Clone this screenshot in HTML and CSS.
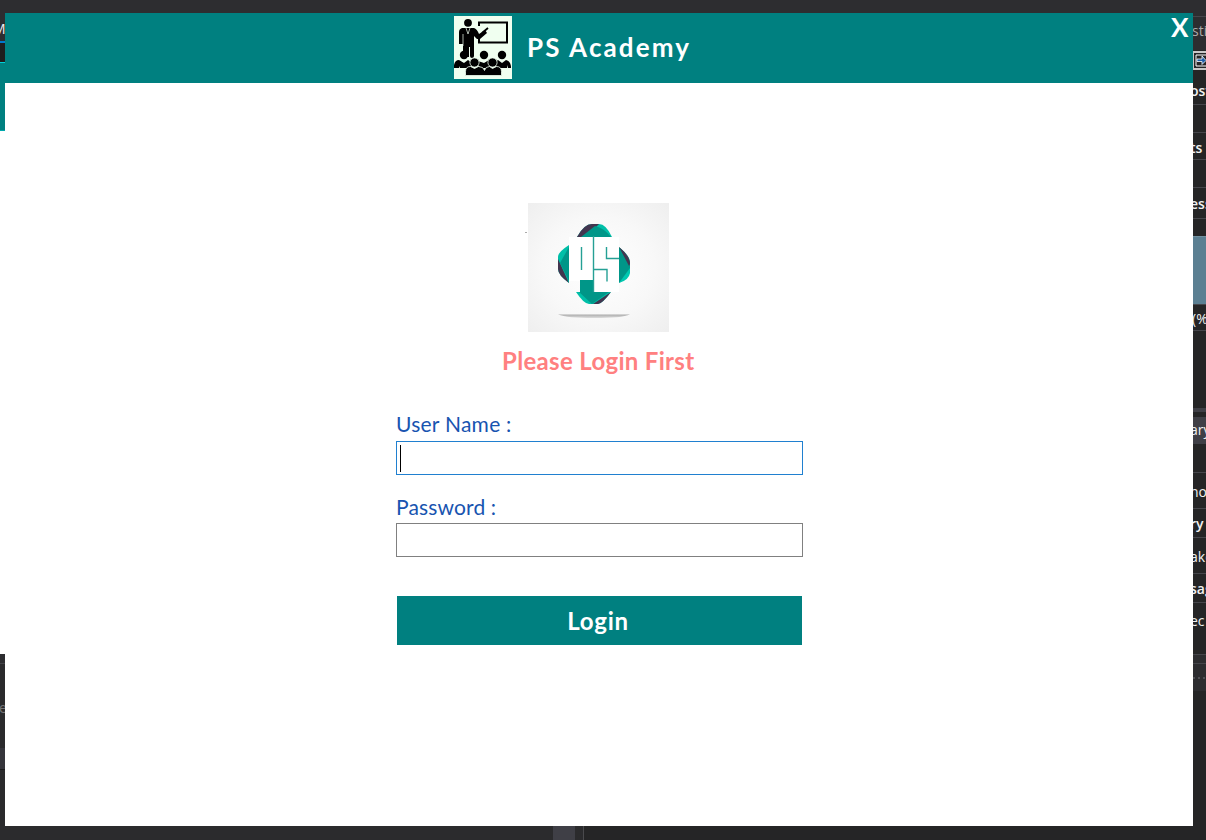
FILE: index.html
```html
<!DOCTYPE html>
<html lang="en">
<head>
<meta charset="utf-8">
<title>PS Academy</title>
<link rel="stylesheet" href="styles.css">
</head>
<body>
<div class="desktop">
  <div class="edge-top"></div>
  <div class="edge-left">
    <div class="l-tab">M</div>
    <div class="l-blue"></div>
    <div class="l-dark"></div>
    <div class="l-teal"></div>
    <div class="l-white"></div>
    <div class="l-line"></div>
    <div class="l-panel">e</div>
    <div class="l-bar"></div>
    <div class="l-rest"></div>
  </div>
  <main class="window">
    <header class="titlebar">
      <div class="brand">
        <svg class="brand-icon" viewBox="0 0 58 63">
          <rect width="58" height="63" fill="#f0fff0"/>
          <rect x="25" y="6.500" width="28" height="20" fill="none" stroke="#000" stroke-width="2"/>
          <path d="M23 10h6v13h-6z" fill="#f0fff0"/>
          <circle cx="14" cy="6.800" r="3.900"/>
          <path d="M8 12h12q3 1 5 6l6-4 2 3-7 6h-3l-3-3v20q0 2-2 2t-2-2V31h-1v10H9V28H5V16q0-3 3-4Z"/>
          <path d="m28 17 6-5" stroke="#000" stroke-width="1.800"/>
          <path d="m12 12 2 6 2-6M9 18v12" fill="none" stroke="#f0fff0" stroke-width=".7"/>
          <g>
            <circle cx="10" cy="39" r="4.200"/><circle cx="30" cy="39" r="4.200"/><circle cx="48" cy="39" r="4.200"/>
            <path d="M0 52v-3q1-5 5-5l5 3 4-3 4 3-2 5H6l-1-2v2ZM24 45l6 2 5-3 2 4-3 4h-7l-3-3ZM41 46l3-2 4 3 4-3q5 1 5 8h-3v-3l-1 3H43Z"/>
          </g>
          <g stroke="#f0fff0" stroke-width=".8">
            <circle cx="20.500" cy="46.500" r="4.600"/><circle cx="38.500" cy="46.500" r="4.600"/>
            <path d="M11.500 59.500v-4q0-5 5-5l4 2 4-2q5 0 6 4 1-4 5-4l3 2 4-2q5 0 5 5v4Z"/>
          </g>
        </svg>
        <h1 class="brand-name">PS Academy</h1>
      </div>
      <button class="close" type="button">X</button>
    </header>
    <section class="login">
      <div class="logo-row">
        <span class="speck"></span>
        <svg class="logo" viewBox="0 0 141 129">
          <defs>
            <radialGradient id="paper" r=".72"><stop offset="0" stop-color="#fff"/><stop offset=".55" stop-color="#f8f8f8"/><stop offset="1" stop-color="#eee"/></radialGradient>
            <linearGradient id="shade" x2="0" y2="1"><stop offset="0" stop-color="#aaa"/><stop offset="1" stop-color="#ddd"/></linearGradient>
          </defs>
          <rect width="141" height="129" fill="url(#paper)"/>
          <path d="M41 34h50v55H53V78H41Z" fill="#fff"/>
          <path d="M49 34Q56 21 64 21h7q7 0 13 13Z" fill="#00bfa8"/>
          <path d="M49 34Q56 21 64 21h7L58 34Z" fill="#43354f"/>
          <path d="m53 34 14-11q9 2 16 11Z" fill="#009688"/>
          <path d="M41 42v38Q30 72 30 66V54q0-5 11-12Z" fill="#00bfa8"/>
          <path d="m30 56 11 24Q30 72 30 66Z" fill="#43354f"/>
          <path d="M41 44v34L32 60Z" fill="#009688"/>
          <path d="M91 44q11 9 11 15v8q0 6-11 13Z" fill="#009688"/>
          <path d="M91 44q11 9 11 17l-1 2Z" fill="#43354f"/>
          <path d="m102 65-11 15q10-3 11-10Z" fill="#00c8b0"/>
          <path d="M48 89h35Q74 101 70 101h-9q-5 0-13-12Z" fill="#00bfa8"/>
          <path d="M83 89Q74 101 70 101h-5Z" fill="#43354f"/>
          <path d="M52 77h14v12h15L64 101 51 89h1Z" fill="#009688"/>
          <path d="M65.500 33v56M53.500 44v23M66 66.500h13v12M78.500 44v11.500H91" fill="none" stroke="#25a095" stroke-width="1.400" transform="matrix(1 0 0 1 0 0)"/>
          <path d="M30 111.500h72q-8 3.500-36 3.500-27 0-36-3.500Z" fill="url(#shade)"/>
        </svg>
      </div>
      <h2 class="prompt"><span>Please Login First</span></h2>
      <form class="form">
        <label class="label user" for="user">User Name :</label>
        <div class="field focused" id="user"><span class="caret"></span></div>
        <label class="label pass" for="password">Password :</label>
        <div class="field" id="password"></div>
        <button class="submit" type="button">Login</button>
      </form>
    </section>
  </main>
  <aside class="edge-right">
    <div class="row h3"></div>
    <div class="row tab"><span>stic</span></div>
    <div class="row tool"><svg width="13" height="19" viewBox="0 0 13 19"><path d="M0 0h13v19H0z" fill="#c8c8c8"/><path d="M1 2h12v15H1z" fill="#252526"/><path d="M3 4h10M3 4v11h10" fill="none" stroke="#fff"/><path d="M4 8h5V5l4 4.500-4 4v-3H4Z" fill="#1c5da8" stroke="#fff" stroke-width=".8"/></svg></div>
    <div class="row h35 bold"><span>ost</span></div>
    <div class="row h28"></div>
    <div class="row h27 bold"><span>ts</span></div>
    <div class="row h28"></div>
    <div class="row h31 bold"><span>ess</span></div>
    <div class="row h17"></div>
    <div class="row graph"></div>
    <div class="row h26"><span class="pct">(%)</span></div>
    <div class="row h77"></div>
    <div class="row splitter"></div>
    <div class="row h5"></div>
    <div class="row summary"><span>ary</span></div>
    <div class="row h29"></div>
    <div class="row h36"><span>no</span></div>
    <div class="row h29 bold"><span>ry</span></div>
    <div class="row h36"><span>ake</span></div>
    <div class="row h29 bold"><span>sag</span></div>
    <div class="row h52"><span>ec</span></div>
    <div class="row h9"></div>
    <div class="row dots"><i></i><i></i><i></i></div>
    <div class="row rest"></div>
  </aside>
  <div class="edge-bottom"><span class="b-a"></span><span class="b-b"></span><span class="b-c"></span><span class="b-d"></span></div>
</div>
</body>
</html>
```
FILE: styles.css
```css
* { box-sizing: border-box; }
body { margin: 0; font-family: Lato, "Noto Sans", sans-serif; }
h1, h2 { margin: 0; }
button { border: 0; padding: 0; font-family: inherit; }

.desktop {
  width: 1206px;
  height: 840px;
  overflow: hidden;
  display: grid;
  grid-template-columns: 5px 1188px 13px;
  grid-template-rows: 13px 813px 14px;
  background: #252526;
}
.edge-top { grid-column: 1 / 4; background: #2d2d30; }
.edge-bottom { grid-column: 1 / 4; display: flex; background: #252526; }
.b-a { width: 553px; background: #2b2b2d; }
.b-b { width: 22px; background: #3f3f46; }
.b-c { width: 8px; background: #2b2b2d; }
.b-d { width: 1px; background: #4a4a4d; }

.edge-left { overflow: hidden; display: flex; flex-direction: column; }
.l-tab { height: 28px; padding-top: 7px; background: #2d2d30; color: #eee; font: 14px/18px "Open Sans", sans-serif; text-indent: -7px; }
.l-blue { height: 2px; background: #007acc; }
.l-dark { height: 20px; background: #1e1e1e; border-bottom: 1px solid #00d0d8; }
.l-teal { height: 68px; background: #008080; border-bottom: 1px solid #00a8ac; }
.l-white { height: 523px; background: #fff; }
.l-line { height: 10px; background: #2d2d30; border-bottom: 1px solid #444448; }
.l-panel { height: 84px; padding-top: 34px; background: #2a2a2c; color: #777; font: 14px/20px "Open Sans", sans-serif; text-indent: -1px; }
.l-bar { height: 22px; background: #35353b; border-bottom: 1px solid #1b1b1c; }
.l-rest { flex: 1; background: #2a2a2c; }

.window { background: #fff; display: flex; flex-direction: column; }
.titlebar { position: relative; height: 70px; background: #008080; display: flex; padding: 3px 0 0 449px; }
.brand { display: flex; align-items: flex-start; gap: 15px; }
.brand-icon { display: block; width: 58px; height: 63px; }
.brand-name { color: #fff; font-size: 26px; line-height: 32px; padding-top: 15px; letter-spacing: 2.100px; white-space: nowrap; }
.close { position: absolute; top: 0; right: 5px; width: 17px; height: 28px; background: none; color: #fff; font: bold 26px/28px Lato, sans-serif; }

.login { display: flex; flex-direction: column; padding-top: 120px; }
.logo-row { display: flex; padding-left: 520px; }
.speck { width: 2px; height: 1px; margin: 29px 1px 0 0; background: #aaa; }
.logo { width: 141px; height: 129px; }
.prompt { padding-left: 497px; margin-top: 14px; height: 32px; color: #ff8080; font-size: 24px; line-height: 30px; letter-spacing: .32px; white-space: nowrap; }
.form { display: flex; flex-direction: column; width: 407px; margin-left: 391px; }
.label { color: #1854b0; font-size: 21px; line-height: 28px; white-space: nowrap; }
.user { height: 31px; margin-top: 32px; letter-spacing: .25px; }
.pass { height: 30px; margin-top: 18px; letter-spacing: .15px; }
.field { height: 34px; padding: 3px; border: 1px solid #808080; background: #fff; }
.focused { border-color: #2080d0; }
.caret { display: block; width: 1px; height: 27px; background: #000; }
.submit { width: 405px; height: 49px; margin: 39px 0 0 1px; padding-right: 3px; background: #008080; color: #fff; font-size: 24px; font-weight: 700; line-height: 49px; letter-spacing: .7px; }

.edge-right { overflow: hidden; display: flex; flex-direction: column; color: #f1f1f1; font: 14px/20px "Open Sans", sans-serif; background: #252526; }
.row { flex: none; display: flex; align-items: center; overflow: hidden; border-bottom: 1px solid #46464b; }
.row span { margin-left: -3px; white-space: nowrap; }
.row .pct { margin-left: -1px; }
.bold { font-weight: 600; }
.h3 { height: 4px; background: #2d2d30; }
.tab { height: 33px; background: #2d2d30; color: #aaa; border: 0; }
.tab span { margin: -5px 0 0 -1px; }
.tool { height: 20px; border: 0; }
.h35 { height: 35px; padding-top: 8px; }
.h28 { height: 28px; }
.h27 { height: 27px; padding-top: 3px; }
.h31 { height: 31px; padding-top: 2px; }
.h17 { height: 17px; border: 0; }
.graph { height: 69px; background: #5b7f92; border-top: 1px solid #708f9e; }
.h26 { height: 26px; padding-top: 2px; }
.h77 { height: 77px; border: 0; }
.splitter { height: 4px; background: #3f3f46; border: 0; }
.h5 { height: 5px; border: 0; }
.summary { height: 27px; padding-bottom: 2px; background: #3f3f46; border: 0; }
.h29 { height: 29px; padding-top: 2px; }
.h36 { height: 36px; padding-top: 3px; }
.h52 { height: 52px; padding-bottom: 16px; }
.h9 { height: 9px; background: #2d2d30; }
.dots { height: 27px; background: #2d2d30; border: 0; gap: 3px; }
.dots i { width: 2px; height: 2px; background: #505055; }
.rest { flex: 1; border: 0; }
```
